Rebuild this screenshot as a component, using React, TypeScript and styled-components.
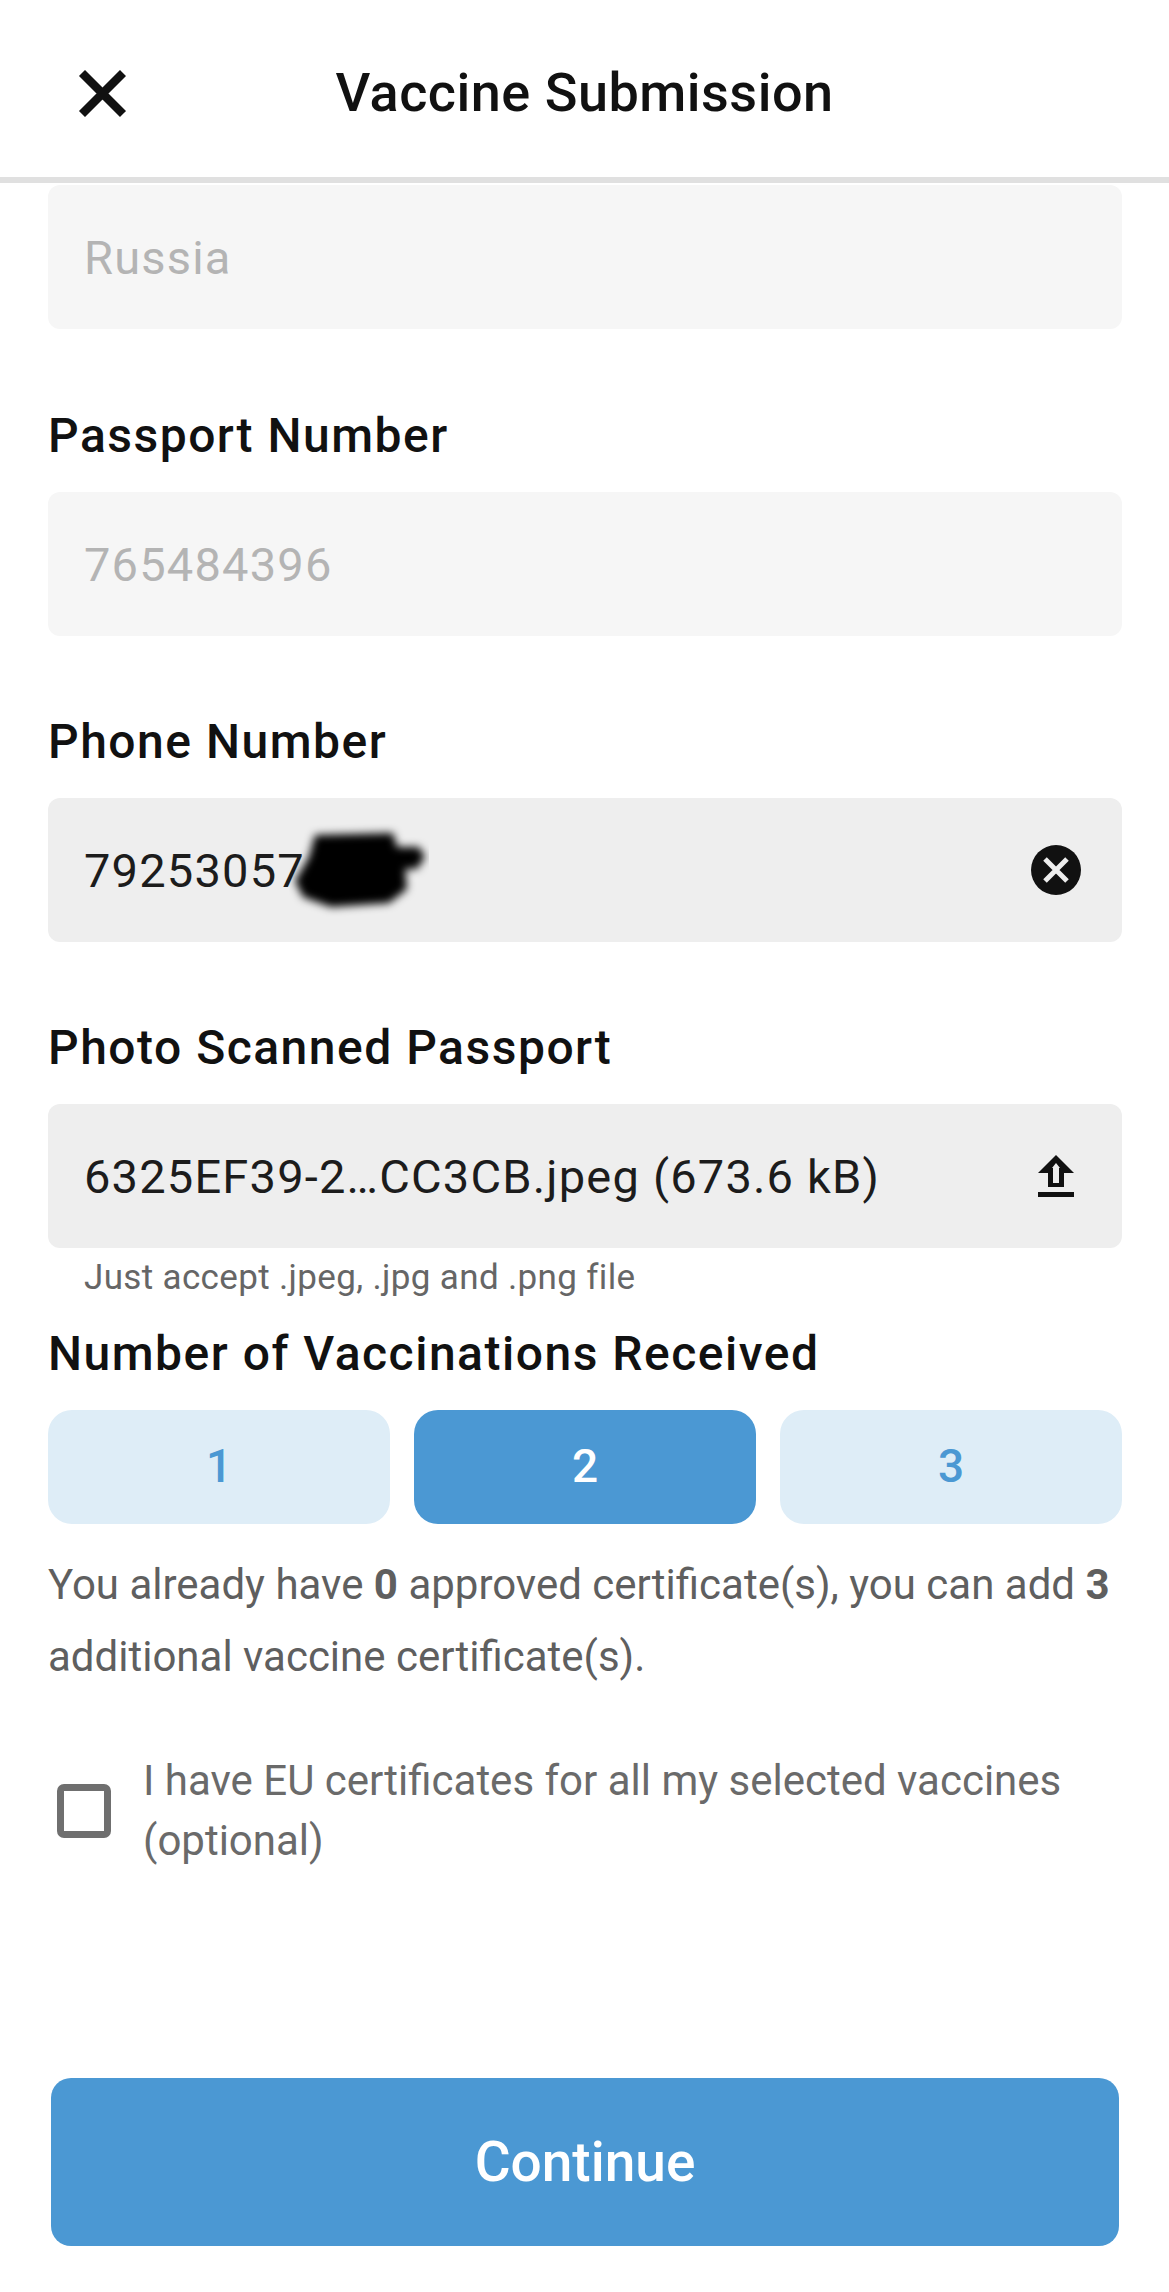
import React from 'react';
import styled, { createGlobalStyle } from 'styled-components';

const GlobalStyle = createGlobalStyle`
  * { box-sizing: border-box; }
  html, body { margin: 0; padding: 0; background: #fff; }
  body { font-family: Roboto, "Noto Sans", "Liberation Sans", sans-serif; }
`;

const Screen = styled.div`
  width: 1169px;
  height: 2292px;
  display: flex;
  flex-direction: column;
  overflow: hidden;
  background: #fff;
`;

const Header = styled.header`
  display: flex;
  align-items: center;
  justify-content: center;
  position: relative;
  height: 183px;
  padding-top: 9px;
  flex-shrink: 0;
  border-bottom: 6px solid #e0e0e0;
`;

const CloseButton = styled.button`
  position: absolute;
  left: 78px;
  top: 70px;
  width: 49px;
  height: 47px;
  padding: 0;
  border: 0;
  background: none;
  svg { display: block; }
`;

const Title = styled.h1`
  margin: 0;
  font-size: 54px;
  font-weight: 500;
  line-height: 64px;
  color: #111;
  letter-spacing: 0.5px;
`;

const Form = styled.main`
  flex: 1;
  display: flex;
  flex-direction: column;
  padding: 2px 47px 0 48px;
`;

const Field = styled.div<{ $gap?: number }>`
  margin-bottom: ${p => p.$gap ?? 76}px;
`;

const Label = styled.div`
  font-size: 48px;
  font-weight: 500;
  line-height: 60px;
  letter-spacing: 1.5px;
  color: #111;
  margin-bottom: 26px;
`;

const InputBox = styled.div<{ $disabled?: boolean }>`
  height: 144px;
  border-radius: 12px;
  padding: 0 41px 0 36px;
  display: flex;
  align-items: center;
  justify-content: space-between;
  background: ${p => (p.$disabled ? '#f6f6f6' : '#eeeeee')};
  color: ${p => (p.$disabled ? '#b4b4b4' : '#1c1c1c')};
  font-size: 47px;
  letter-spacing: 1.2px;
`;

const IconSlot = styled.span`
  width: 50px;
  display: flex;
  justify-content: center;
  svg { display: block; }
`;

const Masked = styled.span`
  position: relative;
  display: inline-block;
`;

const Blot = styled.svg`
  position: absolute;
  left: 205px;
  top: -22px;
`;

const Hint = styled.div`
  font-size: 35px;
  line-height: 44px;
  color: #666;
  padding-left: 36px;
  margin-top: 8px;
  letter-spacing: 0.35px;
`;

const CountRow = styled.div`
  display: grid;
  grid-template-columns: repeat(3, 1fr);
  gap: 24px;
`;

const CountButton = styled.button<{ $active?: boolean }>`
  height: 114px;
  border: 0;
  border-radius: 24px;
  padding: 0 0 3px;
  font-family: inherit;
  font-size: 46px;
  font-weight: 500;
  background: ${p => (p.$active ? '#4b98d3' : '#deedf7')};
  color: ${p => (p.$active ? '#fff' : '#4b98d3')};
`;

const Note = styled.p`
  margin: 25px 0 0;
  font-size: 42px;
  line-height: 72px;
  color: #5f5f5f;
  b { font-weight: 700; }
`;

const CheckRow = styled.label`
  display: flex;
  align-items: center;
  gap: 32px;
  margin-top: 58px;
  padding-left: 9px;
`;

const CheckBox = styled.span`
  width: 54px;
  height: 54px;
  flex-shrink: 0;
  border: 7px solid #6f6f6f;
  border-radius: 7px;
  background: #fff;
`;

const CheckText = styled.span`
  font-size: 42px;
  line-height: 60px;
  color: #6a6a6a;
`;

const Footer = styled.footer`
  padding: 0 50px 46px 51px;
`;

const ContinueButton = styled.button`
  width: 100%;
  height: 168px;
  border: 0;
  border-radius: 20px;
  background: #4b98d3;
  color: #fff;
  font-family: inherit;
  font-size: 55px;
  font-weight: 500;
`;

const CloseIcon = () => (
  <svg width="49" height="47" viewBox="0 0 49 47">
    <path d="M4 3 L45 44 M45 3 L4 44" stroke="#111" strokeWidth="8.5" fill="none" />
  </svg>
);

const ClearIcon = () => (
  <svg width="50" height="50" viewBox="0 0 50 50">
    <circle cx="25" cy="25" r="25" fill="#111" />
    <path d="M14 14 L36 36 M36 14 L14 36" stroke="#eee" strokeWidth="5" />
  </svg>
);

const UploadIcon = () => (
  <svg width="36" height="42" viewBox="0 0 36 42">
    <path d="M18 0 L36 18 L26 18 L26 32 L10 32 L10 18 L0 18 Z" fill="#111" />
    <path d="M18 8 L22 13 L21 13 L21 28 L15 28 L15 13 L14 13 Z" fill="#eee" />
    <rect x="0" y="37" width="36" height="5" fill="#111" />
  </svg>
);

const Scribble = () => (
  <Blot width="140" height="96" viewBox="0 0 140 96">
    <defs>
      <filter id="smudge" x="-20%" y="-20%" width="140%" height="140%">
        <feGaussianBlur stdDeviation="4" />
      </filter>
    </defs>
    <g filter="url(#smudge)">
      <path d="M26 14 L104 12 L108 26 L130 26 L136 36 L128 48 L116 48 L118 68 L100 82 L42 86 L14 76 L6 60 L20 36 Z" fill="#000" />
    </g>
  </Blot>
);

export default function App() {
  return (
    <Screen>
      <GlobalStyle />
      <Header>
        <CloseButton><CloseIcon /></CloseButton>
        <Title>Vaccine Submission</Title>
      </Header>
      <Form>
        <Field $gap={77}>
          <InputBox $disabled>Russia</InputBox>
        </Field>
        <Field>
          <Label>Passport Number</Label>
          <InputBox $disabled>765484396</InputBox>
        </Field>
        <Field>
          <Label>Phone Number</Label>
          <InputBox>
            <Masked>79253057<Scribble /></Masked>
            <IconSlot><ClearIcon /></IconSlot>
          </InputBox>
        </Field>
        <Field $gap={24}>
          <Label>Photo Scanned Passport</Label>
          <InputBox>
            6325EF39-2…CC3CB.jpeg (673.6 kB)
            <IconSlot><UploadIcon /></IconSlot>
          </InputBox>
          <Hint>Just accept .jpeg, .jpg and .png file</Hint>
        </Field>
        <Label>Number of Vaccinations Received</Label>
        <CountRow>
          <CountButton>1</CountButton>
          <CountButton $active>2</CountButton>
          <CountButton>3</CountButton>
        </CountRow>
        <Note>
          You already have <b>0</b> approved certificate(s), you can add <b>3</b> additional vaccine certificate(s).
        </Note>
        <CheckRow>
          <CheckBox />
          <CheckText>I have EU certificates for all my selected vaccines (optional)</CheckText>
        </CheckRow>
      </Form>
      <Footer>
        <ContinueButton>Continue</ContinueButton>
      </Footer>
    </Screen>
  );
}
